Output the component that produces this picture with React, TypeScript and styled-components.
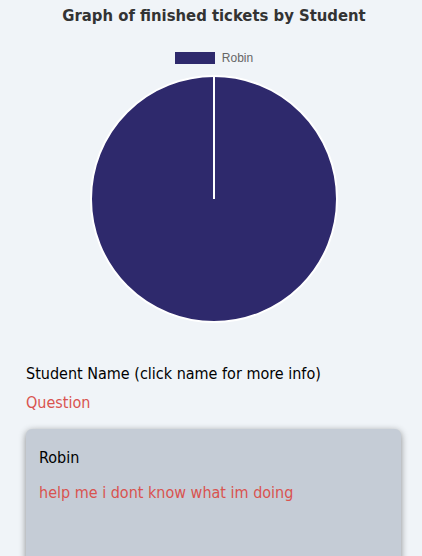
import React from "react";
import styled, { createGlobalStyle } from "styled-components";

const Global = createGlobalStyle`
  html, body { margin: 0; padding: 0; background: #f0f4f8; }
  body { font-family: "DejaVu Sans Condensed", "DejaVu Sans", sans-serif; color: #000; overflow: hidden; }
`;

const Page = styled.div`
  width: 422px;
  height: 556px;
  background: #f0f4f8;
  overflow: hidden;
`;

const ChartSection = styled.section`
  display: flex;
  flex-direction: column;
  align-items: center;
  padding: 6px 0 0 6px;
`;

const Title = styled.h2`
  margin: 0;
  font-size: 16.5px;
  font-weight: bold;
  color: #333;
  line-height: 20px;
`;

const Legend = styled.div`
  display: flex;
  align-items: center;
  gap: 7px;
  margin-top: 25px;
  font-family: "Liberation Sans", Arial, sans-serif;
  font-size: 12px;
  color: #666;
`;

const Swatch = styled.span<{ $color: string }>`
  display: inline-block;
  width: 40px;
  height: 12px;
  background: ${(p) => p.$color};
`;

const PieBox = styled.div`
  margin-top: 9px;
  width: 250px;
  height: 250px;
`;

const List = styled.section`
  padding: 0 21px 0 26px;
  margin-top: 40px;
`;

const Heading = styled.div`
  font-size: 16px;
  line-height: 20px;
`;

const Question = styled.div`
  margin-top: 9px;
  font-size: 16px;
  line-height: 20px;
  color: #d9534f;
`;

const Card = styled.div`
  margin-top: 16px;
  background: #c5ccd6;
  border-radius: 6px;
  box-shadow: 0 2px 7px rgba(0, 0, 0, 0.45);
  padding: 19px 13px;
  height: 160px;
`;

const CardName = styled.div`
  font-size: 16px;
  line-height: 20px;
`;

const CardQuestion = styled.div`
  margin-top: 15px;
  font-size: 16px;
  line-height: 20px;
  color: #d9534f;
`;

const PIE = "#2e296c";

export default function App() {
  return (
    <Page>
      <Global />
      <ChartSection>
        <Title>Graph of finished tickets by Student</Title>
        <Legend>
          <Swatch $color={PIE} />
          <span>Robin</span>
        </Legend>
        <PieBox>
          <svg width="250" height="250" viewBox="0 0 250 250">
            <circle cx="125" cy="125" r="123" fill={PIE} stroke="#fff" strokeWidth="2" />
            <line x1="125" y1="2" x2="125" y2="125" stroke="#fff" strokeWidth="2" />
          </svg>
        </PieBox>
      </ChartSection>
      <List>
        <Heading>Student Name (click name for more info)</Heading>
        <Question>Question</Question>
        <Card>
          <CardName>Robin</CardName>
          <CardQuestion>help me i dont know what im doing</CardQuestion>
        </Card>
      </List>
    </Page>
  );
}
